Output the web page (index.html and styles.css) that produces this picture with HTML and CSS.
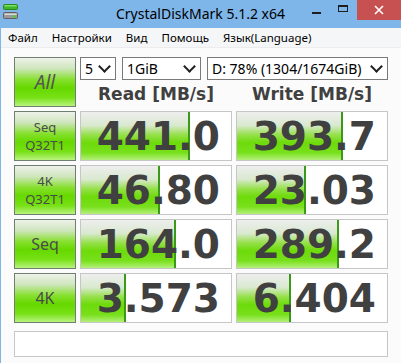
FILE: index.html
```html
<!DOCTYPE html>
<html lang="ru">
<head>
<meta charset="UTF-8" />
<title>CrystalDiskMark 5.1.2 x64</title>
<link rel="stylesheet" href="styles.css">
</head>
<body>

<div class="window">
  <div class="titlebar">
    <div class="app-icon">
      <svg width="16" height="16" viewBox="0 0 16 16">
        <rect x="0.5" y="0.5" width="14" height="5" rx="1" fill="#3fb52a" stroke="#2a8a1c"/>
        <rect x="1.5" y="1" width="12" height="1.5" fill="#7fe06a"/>
        <rect x="0.5" y="8.5" width="14" height="6" rx="1" fill="#9a9a9a" stroke="#606060"/>
        <rect x="1.5" y="9.5" width="12" height="1.5" fill="#d8d8d8"/>
        <rect x="10" y="11.5" width="3" height="2" fill="#4cd030"/>
      </svg>
    </div>
    <div class="title">CrystalDiskMark 5.1.2 x64</div>
    <div class="caption-buttons">
      <div class="cap-btn">
        <svg width="10" height="10" viewBox="0 0 10 10"><rect x="0" y="7" width="9" height="2" fill="#1e1e1e"/></svg>
      </div>
      <div class="cap-btn">
        <svg width="11" height="10" viewBox="0 0 11 10"><rect x="0.5" y="0.5" width="9" height="6" fill="none" stroke="#1e1e1e"/><rect x="0" y="0" width="10" height="2" fill="#1e1e1e"/></svg>
      </div>
      <div class="cap-btn close">
        <svg width="10" height="10" viewBox="0 0 10 10"><path d="M1 1 L9 9 M9 1 L1 9" stroke="#fff" stroke-width="1.6"/></svg>
      </div>
    </div>
  </div>

  <div class="client">
    <div class="menubar">
      <span class="menu-item">Файл</span>
      <span class="menu-item">Настройки</span>
      <span class="menu-item">Вид</span>
      <span class="menu-item">Помощь</span>
      <span class="menu-item">Язык(Language)</span>
    </div>

    <div class="bench">
      <div class="test-btn all">All</div>

      <div class="controls">
        <div class="selects">
          <div class="combo w-count">5 <span class="chev"></span></div>
          <div class="combo w-size">1GiB <span class="chev"></span></div>
          <div class="combo w-drive">D: 78% (1304/1674GiB) <span class="chev"></span></div>
        </div>
        <div class="col-head">Read [MB/s]</div>
        <div class="col-head">Write [MB/s]</div>
      </div>

      <div class="test-btn">Seq<br>Q32T1</div>
      <div class="cell"><div class="bar" style="width:109px"></div><div class="value">441.0</div></div>
      <div class="cell"><div class="bar" style="width:106px"></div><div class="value">393.7</div></div>

      <div class="test-btn">4K<br>Q32T1</div>
      <div class="cell"><div class="bar" style="width:79px"></div><div class="value">46.80</div></div>
      <div class="cell"><div class="bar" style="width:69px"></div><div class="value">23.03</div></div>

      <div class="test-btn big">Seq</div>
      <div class="cell"><div class="bar" style="width:95px"></div><div class="value">164.0</div></div>
      <div class="cell"><div class="bar" style="width:102px"></div><div class="value">289.2</div></div>

      <div class="test-btn big">4K</div>
      <div class="cell"><div class="bar" style="width:45px"></div><div class="value">3.573</div></div>
      <div class="cell"><div class="bar" style="width:54px"></div><div class="value">6.404</div></div>

      <div class="comment"></div>
    </div>
  </div>
</div>

</body>
</html>
```

FILE: styles.css
```css
body { margin: 0; font-family: "Noto Sans", "Open Sans", sans-serif; background: #fbfbfb; }
.window { width: 401px; height: 363px; background: #7eb6ea; overflow: hidden; }

/* title bar */
.titlebar { height: 28px; display: grid; grid-template-columns: 1fr auto 1fr; }
.app-icon { padding: 4px 0 0 3px; }
.app-icon svg { display: block; }
.title { font-size: 14px; line-height: 27px; color: #000; }
.caption-buttons { display: flex; justify-content: flex-end; align-items: flex-start; }
.cap-btn { width: 26px; height: 20px; display: flex; align-items: center; justify-content: center; }
.cap-btn:nth-child(2) { width: 27px; }
.cap-btn svg { display: block; }
.cap-btn.close { width: 44px; background: #c75050; }

.client { margin-left: 1px; height: 335px; background: #fbfbfb; }

/* menu */
.menubar { height: 19px; background: #f5f6f7; border-bottom: 1px solid #ececec; display: flex; }
.menu-item { font-size: 11.5px; line-height: 19px; padding: 0 7px; color: #000; }

/* benchmark grid */
.bench { display: grid; grid-template-columns: 62px 152px 152px; grid-template-rows: repeat(5, 50px) 30px; gap: 4px; padding: 9px 0 0 13px; }

.test-btn {
  box-sizing: border-box;
  border: 1px solid #6f7f6f;
  background: linear-gradient(to bottom, #eef1ea 0%, #cfe6bd 22%, #86e02e 45%, #66d900 62%, #76e014 82%, #b8f37e 100%);
  color: #4a4a4a;
  font-size: 13px;
  line-height: 18px;
  display: flex; align-items: center; justify-content: center; text-align: center;
}
.test-btn.all { font-size: 19px; font-style: italic; color: #555; }
.test-btn.big { font-size: 16px; }

.controls { grid-column: 2 / 4; display: grid; grid-template-columns: 152px 152px; grid-template-rows: 23px 1fr; column-gap: 4px; }
.selects { grid-column: 1 / 3; display: flex; gap: 6px; }
.combo {
  box-sizing: border-box; height: 23px; border: 1px solid #7a7a7a; background: #fff;
  font-size: 14px; line-height: 21px; padding-left: 4px; color: #000;
  display: flex; justify-content: space-between; align-items: center;
}
.w-count { width: 36px; }
.w-size { width: 79px; }
.w-drive { width: 181px; }
.chev { width: 7px; height: 7px; border-right: 2px solid #1e1e1e; border-bottom: 2px solid #1e1e1e; transform: rotate(45deg); margin: 0 6px 4px 0; }

.col-head { font-family: "DejaVu Sans", sans-serif; font-weight: bold; font-size: 17px; color: #404040; text-align: center; line-height: 27px; padding-top: 1px; }

.cell { display: grid; box-sizing: border-box; border: 1px solid #c6c6c6; background: #fff; }
.cell > * { grid-area: 1 / 1; }
.bar {
  box-sizing: border-box;
  border-right: 2px solid #3a9a18;
  background: linear-gradient(to bottom, #eeeeee 0%, #d9e9cf 28%, #94e048 48%, #6ddb0a 64%, #78e01c 85%, #b4f07a 100%);
}
.value {
  justify-self: end; align-self: center; padding-right: 11px;
  font-family: "DejaVu Sans", sans-serif; font-weight: bold; font-size: 39px; color: #404040; line-height: 1;
}

.comment { grid-column: 1 / 4; margin-top: 4px; box-sizing: border-box; border: 1px solid #c6c6c6; background: #fff; }
```
